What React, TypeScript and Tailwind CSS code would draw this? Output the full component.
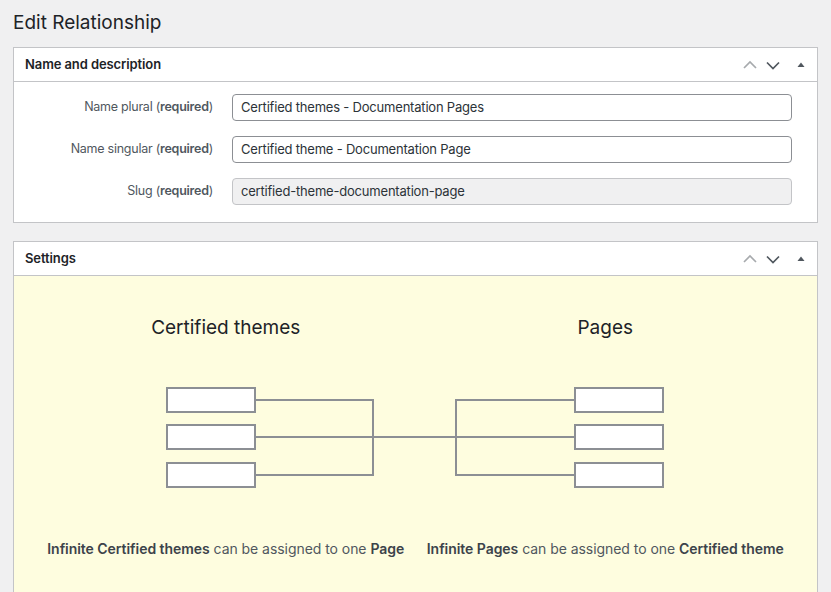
import React from 'react'

const font = { fontFamily: 'Inter, "Liberation Sans", sans-serif' }

function PanelHandles() {
  return (
    <div className="flex items-center gap-[7px] pr-[6px]">
      <svg width="16" height="16" viewBox="0 0 16 16" fill="none">
        <path d="M2 11 L8 5 L14 11" stroke="#a7aaad" strokeWidth="1.7" />
      </svg>
      <svg width="16" height="16" viewBox="0 0 16 16" fill="none">
        <path d="M2 5.5 L8 11.5 L14 5.5" stroke="#50575e" strokeWidth="1.7" />
      </svg>
      <svg width="20" height="16" viewBox="0 0 20 16" className="ml-[3px]">
        <path d="M10 5.5 L13.5 10 L6.5 10 Z" fill="#50575e" />
      </svg>
    </div>
  )
}

function Panel({ title, children }: { title: string; children: React.ReactNode }) {
  return (
    <div className="mx-[13px] border border-[#c3c4c7] bg-white">
      <div className="flex h-[34px] items-center justify-between border-b border-[#c3c4c7] pl-[11px]">
        <h2 className="text-[13px] font-semibold tracking-[-0.1px] text-[#1d2327]">{title}</h2>
        <PanelHandles />
      </div>
      {children}
    </div>
  )
}

function Field({ label, value, readOnly }: { label: string; value: string; readOnly?: boolean }) {
  return (
    <div className="flex items-center">
      <label className="w-[185px] text-right text-[12.5px] tracking-[-0.25px] text-[#50575e]">
        {label} (<span className="font-semibold">required</span>)
      </label>
      <div
        className={
          readOnly
            ? 'ml-[19px] flex h-[27px] flex-1 items-center rounded-[4px] border border-[#c3c4c7] bg-[#f0f0f1] px-[8px] text-[13px] tracking-[-0.2px] text-[#2c3338]'
            : 'ml-[19px] flex h-[27px] flex-1 items-center rounded-[4px] border border-[#8c8f94] bg-white px-[8px] text-[13px] tracking-[-0.2px] text-[#2c3338]'
        }
      >
        {value}
      </div>
    </div>
  )
}

function Diagram() {
  const boxes = [0, 37, 75]
  const mids = [13, 50, 88]
  return (
    <svg width="499" height="102" viewBox="0 0 499 102" fill="none">
      {mids.map((y) => (
        <path key={'l' + y} d={`M90 ${y} H207`} stroke="#8c8f94" strokeWidth="2" />
      ))}
      {mids.map((y) => (
        <path key={'r' + y} d={`M290 ${y} H408`} stroke="#8c8f94" strokeWidth="2" />
      ))}
      <path d="M207 12 V89" stroke="#8c8f94" strokeWidth="2" />
      <path d="M290 12 V89" stroke="#8c8f94" strokeWidth="2" />
      <path d="M207 50 H290" stroke="#8c8f94" strokeWidth="2" />
      {boxes.map((y) => (
        <rect key={'a' + y} x="1" y={y + 1} width="88" height="24" fill="white" stroke="#8c8f94" strokeWidth="2" />
      ))}
      {boxes.map((y) => (
        <rect key={'b' + y} x="409" y={y + 1} width="88" height="24" fill="white" stroke="#8c8f94" strokeWidth="2" />
      ))}
    </svg>
  )
}

export default function App() {
  return (
    <div className="min-h-screen bg-[#f0f0f1] pb-[20px]" style={font}>
      <h1 className="px-[13px] pt-[11px] pb-[12px] text-[19px] leading-[24px] text-[#1d2327]">Edit Relationship</h1>

      <Panel title="Name and description">
        <div className="flex flex-col gap-[15px] pt-[12px] pb-[17px] pl-[14px] pr-[25px]">
          <Field label="Name plural" value="Certified themes - Documentation Pages" />
          <Field label="Name singular" value="Certified theme - Documentation Page" />
          <Field label="Slug" value="certified-theme-documentation-page" readOnly />
        </div>
      </Panel>

      <div className="h-[18px]" />

      <Panel title="Settings">
        <div className="bg-[#fefddf] px-[22px] pt-[40px] pb-[40px]">
          <div className="grid grid-cols-2">
            <div className="text-center text-[19px] leading-[24px] text-[#1d2327]">Certified themes</div>
            <div className="text-center text-[19px] leading-[24px] text-[#1d2327]">Pages</div>
          </div>
          <div className="mt-[47px] flex justify-center">
            <Diagram />
          </div>
          <div className="mt-[49px] grid grid-cols-2 text-[14px] tracking-[-0.05px] text-[#50575e]">
            <p className="text-center">
              <span className="font-semibold text-[#3c434a]">Infinite Certified themes</span> can be assigned to one{' '}
              <span className="font-semibold text-[#3c434a]">Page</span>
            </p>
            <p className="text-center">
              <span className="font-semibold text-[#3c434a]">Infinite Pages</span> can be assigned to one{' '}
              <span className="font-semibold text-[#3c434a]">Certified theme</span>
            </p>
          </div>
        </div>
      </Panel>
    </div>
  )
}
